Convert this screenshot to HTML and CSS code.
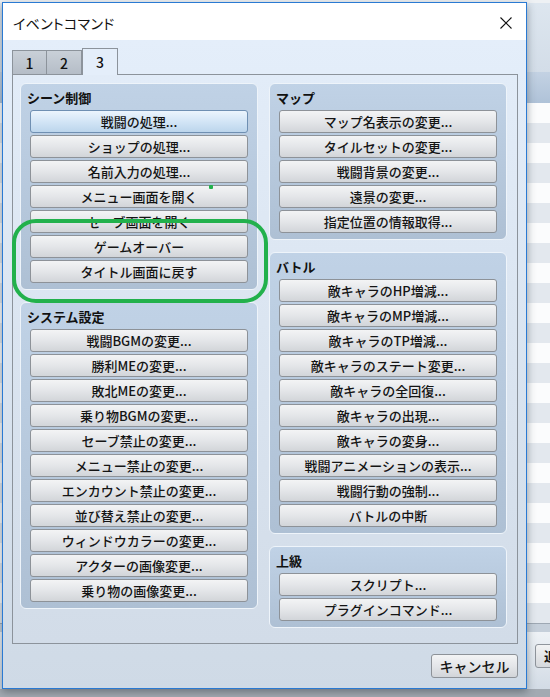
FILE: index.html
```html
<!DOCTYPE html>
<html lang="ja">
<head>
<meta charset="utf-8">
<title>イベントコマンド</title>
<link rel="stylesheet" href="styles.css">
</head>
<body>
<div class="desk">
  <div class="bgapp">
    <div class="bg-top"></div>
    <div class="bg-head"></div>
    <div class="bg-rows">
      <div class="row"></div><div class="row alt"></div><div class="row"></div><div class="row alt"></div>
      <div class="row"></div><div class="row alt"></div><div class="row"></div><div class="row alt"></div>
      <div class="row"></div><div class="row alt"></div><div class="row"></div><div class="row alt"></div>
      <div class="row"></div><div class="row alt"></div><div class="row"></div><div class="row alt"></div>
      <div class="row"></div><div class="row alt"></div><div class="row"></div><div class="row alt"></div>
      <div class="row"></div><div class="row alt"></div><div class="row"></div><div class="row alt"></div>
      <div class="row"></div><div class="row alt"></div>
    </div>
    <div class="bg-sep"></div>
    <div class="bg-foot"><span class="bg-btn">追</span></div>
  </div>

  <div class="dialog">
    <div class="titlebar">
      <span class="title">イベントコマンド</span>
      <svg class="close" width="12" height="12" viewBox="0 0 12 12"><path d="M0.5 0.5 L11.5 11.5 M11.5 0.5 L0.5 11.5" stroke="#111" stroke-width="1.1" fill="none"/></svg>
    </div>
    <div class="dbody">
      <div class="tabs">
        <span class="tab">1</span>
        <span class="tab">2</span>
        <span class="tab active">3</span>
      </div>
      <div class="panel">
        <div class="col">
          <div class="group">
            <div class="ghead">シーン制御</div>
            <div class="btns">
              <div class="btn focus">戦闘の処理...</div>
              <div class="btn">ショップの処理...</div>
              <div class="btn">名前入力の処理...</div>
              <div class="btn">メニュー画面を開く</div>
              <div class="btn">セーブ画面を開く</div>
              <div class="btn">ゲームオーバー</div>
              <div class="btn">タイトル画面に戻す</div>
            </div>
          </div>
          <div class="group">
            <div class="ghead">システム設定</div>
            <div class="btns">
              <div class="btn">戦闘BGMの変更...</div>
              <div class="btn">勝利MEの変更...</div>
              <div class="btn">敗北MEの変更...</div>
              <div class="btn">乗り物BGMの変更...</div>
              <div class="btn">セーブ禁止の変更...</div>
              <div class="btn">メニュー禁止の変更...</div>
              <div class="btn">エンカウント禁止の変更...</div>
              <div class="btn">並び替え禁止の変更...</div>
              <div class="btn">ウィンドウカラーの変更...</div>
              <div class="btn">アクターの画像変更...</div>
              <div class="btn">乗り物の画像変更...</div>
            </div>
          </div>
        </div>
        <div class="col">
          <div class="group">
            <div class="ghead">マップ</div>
            <div class="btns">
              <div class="btn">マップ名表示の変更...</div>
              <div class="btn">タイルセットの変更...</div>
              <div class="btn">戦闘背景の変更...</div>
              <div class="btn">遠景の変更...</div>
              <div class="btn">指定位置の情報取得...</div>
            </div>
          </div>
          <div class="group">
            <div class="ghead">バトル</div>
            <div class="btns">
              <div class="btn">敵キャラのHP増減...</div>
              <div class="btn">敵キャラのMP増減...</div>
              <div class="btn">敵キャラのTP増減...</div>
              <div class="btn">敵キャラのステート変更...</div>
              <div class="btn">敵キャラの全回復...</div>
              <div class="btn">敵キャラの出現...</div>
              <div class="btn">敵キャラの変身...</div>
              <div class="btn">戦闘アニメーションの表示...</div>
              <div class="btn">戦闘行動の強制...</div>
              <div class="btn">バトルの中断</div>
            </div>
          </div>
          <div class="group">
            <div class="ghead">上級</div>
            <div class="btns">
              <div class="btn">スクリプト...</div>
              <div class="btn">プラグインコマンド...</div>
            </div>
          </div>
        </div>
      </div>
      <div class="footer">
        <div class="btn cancel">キャンセル</div>
      </div>
    </div>
  </div>

  <div class="mark-ring"></div>
  <div class="mark-dot"></div>
</div>
</body>
</html>
```

FILE: styles.css
```css
html, body {
  margin: 0;
  padding: 0;
}
body {
  width: 550px;
  height: 697px;
  overflow: hidden;
  background: #a3aab2;
  font-family: "Noto Sans CJK JP", "Noto Sans", sans-serif;
  color: #111;
}
.desk {
  position: relative;
  width: 550px;
  height: 697px;
}

/* background application window */
.bgapp {
  display: flex;
  flex-direction: column;
  height: 689px;
  background: #d6dfe8;
}
.bg-top {
  height: 72px;
  background: linear-gradient(#eef1f4 0, #eef1f4 3px, #dde6ef 3px, #d3dde8);
}
.bg-head {
  height: 31px;
  background: linear-gradient(#c3d2e3, #afc2d8);
}
.bg-rows {
  display: flex;
  flex-direction: column;
}
.row {
  height: 20px;
  background: #fbfcfd;
}
.row.alt {
  background: #e3e8ee;
}
.bg-sep {
  height: 8px;
  background: #c5cfda;
  border-top: 1px solid #9ea8b3;
}
.bg-foot {
  flex: 1;
  background: linear-gradient(#eef2f6, #d2dbe5);
  padding: 10px 0 0 535px;
}
.bg-btn {
  display: inline-block;
  height: 22px;
  line-height: 22px;
  padding: 0 8px;
  border: 1px solid #8f959c;
  border-radius: 3px;
  background: linear-gradient(#f2f3f4, #d5d8dc);
  font-size: 13px;
  font-weight: bold;
}

/* dialog window */
.dialog {
  position: absolute;
  left: 2px;
  top: 2px;
  width: 523px;
  height: 685px;
  border: 1px solid #2a7ad3;
  box-shadow: 0 3px 8px rgba(40, 50, 60, 0.45);
  display: flex;
  flex-direction: column;
}
.titlebar {
  height: 37px;
  background: #fff;
  display: flex;
  align-items: center;
  justify-content: space-between;
  padding: 0 14px 0 10px;
}
.title {
  font-size: 14px;
  color: #111;
  position: relative;
  top: 1px;
  font-feature-settings: "palt";
  letter-spacing: 0.3px;
}
.close {
  display: block;
  position: relative;
  top: 1px;
}
.dbody {
  flex: 1;
  background: linear-gradient(#e4eefa, #cfdae6);
  padding: 9px 8px 0 9px;
  display: flex;
  flex-direction: column;
}
.tabs {
  display: flex;
  height: 25px;
  align-items: flex-end;
  position: relative;
  z-index: 1;
}
.tab {
  box-sizing: border-box;
  width: 35px;
  height: 24px;
  border: 1px solid #8c939b;
  border-bottom: none;
  background: linear-gradient(#c9d0d8, #b5bdc7);
  font-size: 14px;
  font-weight: 500;
  text-align: center;
  line-height: 24px;
}
.tab + .tab {
  border-left: none;
}
.tab.active {
  height: 27px;
  margin-bottom: -1px;
  width: 36px;
  background: #e4eefa;
  border-left: 1px solid #8c939b;
  line-height: 27px;
}
.panel {
  box-sizing: border-box;
  height: 570px;
  border: 1px solid #8c939b;
  background: linear-gradient(#e2ecf8, #d2dce8);
  display: flex;
  gap: 11px;
  padding: 8px 0 0 7px;
}
.col {
  display: flex;
  flex-direction: column;
  gap: 12px;
  width: 238px;
}
.group {
  box-sizing: border-box;
  border: 1px solid #eef4fa;
  border-radius: 6px;
  background: linear-gradient(#c0d2e6, #aec0d4);
  padding: 0 9px 6px 9px;
}
.ghead {
  height: 26px;
  line-height: 25px;
  font-size: 13px;
  font-weight: bold;
  margin-left: -3px;
  position: relative;
  top: 1px;
}
.btns {
  display: flex;
  flex-direction: column;
  gap: 2px;
}
.btn {
  box-sizing: border-box;
  height: 23px;
  border: 1px solid #8d9298;
  border-radius: 3px;
  background: linear-gradient(#f3f4f5, #e4e6e9 50%, #d2d5d9);
  font-size: 13px;
  font-weight: 500;
  line-height: 21px;
  text-align: center;
  color: #141414;
  white-space: nowrap;
}
.btn.focus {
  border-color: #6f8fb2;
  background: linear-gradient(#ecf5fd, #d3e5f6 50%, #bcd5ec);
}
.footer {
  display: flex;
  justify-content: flex-end;
  padding: 10px 0 0 0;
}
.btn.cancel {
  width: 87px;
  height: 24px;
  line-height: 22px;
  font-size: 14px;
}

/* annotation marks drawn over the screenshot */
.mark-ring {
  position: absolute;
  left: 12px;
  top: 219px;
  width: 248px;
  height: 76px;
  border: 4px solid #22b14c;
  border-radius: 24px;
}
.mark-dot {
  position: absolute;
  left: 209px;
  top: 185px;
  width: 4px;
  height: 4px;
  background: #22b14c;
  border-radius: 1px;
}
```
